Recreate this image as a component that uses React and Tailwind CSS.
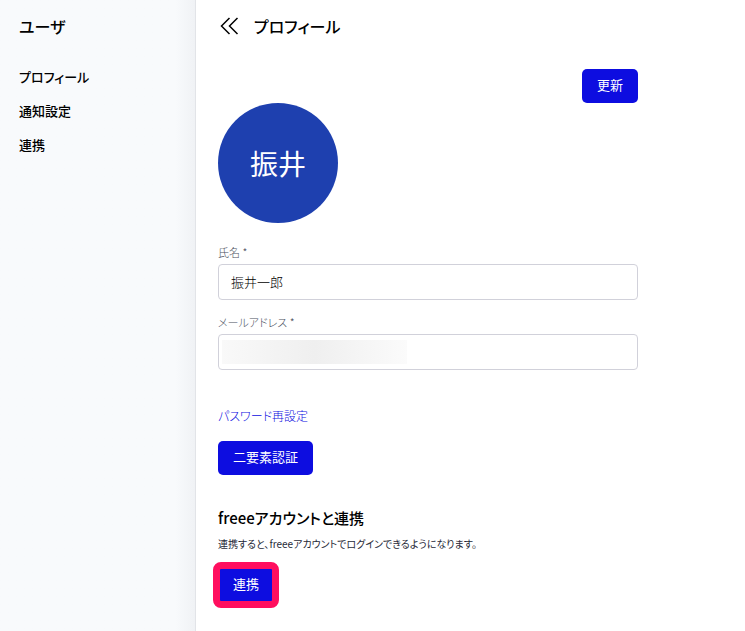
import React, { useState } from 'react';

const menuItems = [
  { label: 'プロフィール', href: '#profile' },
  { label: '通知設定', href: '#notifications' },
  { label: '連携', href: '#connections' },
];

const Button = ({ children, type = 'button' }) => (
  <button
    type={type}
    className="h-[34px] px-[15px] pb-[2px] rounded-[5px] bg-[#0d0de0] text-white text-[13px] hover:bg-[#0a0ab8]"
  >
    {children}
  </button>
);

const Sidebar = () => (
  <aside className="w-[196px] shrink-0 px-[19px] bg-linear-to-r from-[#f8fafc] from-90% to-[#f0f2f5] border-r border-[#e2e4e8]">
    <h2 className="h-[52px] flex items-center text-[16px] font-medium">ユーザ</h2>
    <nav className="pt-2">
      <ul>
        {menuItems.map((item) => (
          <li key={item.href}>
            <a href={item.href} className="flex items-center h-[34px] text-[13px] font-medium">
              {item.label}
            </a>
          </li>
        ))}
      </ul>
    </nav>
  </aside>
);

const Field = ({ id, label, children }) => (
  <div>
    <label htmlFor={id} className="block h-[24px] leading-[24px] text-[11px] font-light text-[#4b5160]">
      {label} *
    </label>
    {children}
  </div>
);

const inputClass =
  'block w-full h-[36px] px-3 pb-[2px] rounded-[4px] border border-[#d1d1da] bg-white text-[13px] font-light outline-none focus:border-[#0d0de0]';

export default function App() {
  const [name, setName] = useState('振井一郎');
  const [email, setEmail] = useState('');

  return (
    <div className="flex min-h-screen bg-white text-black font-['Noto_Sans_CJK_JP',sans-serif] [font-feature-settings:'palt']">
      <Sidebar />

      <main className="flex-1 min-w-0 px-[22px] pb-5">
        <header className="h-[52px] flex items-center gap-[14px]">
          <button type="button" aria-label="メニューを閉じる">
            <svg width="22" height="20" viewBox="0 0 22 20" fill="none" stroke="currentColor" strokeWidth="1.5">
              <path d="M11.5 2 3.5 10l8 8M19.5 2l-8 8 8 8" />
            </svg>
          </button>
          <h1 className="text-[16px] font-medium">プロフィール</h1>
        </header>

        <form className="max-w-[420px] pt-[17px]" onSubmit={(e) => e.preventDefault()}>
          <div className="flex justify-end">
            <Button type="submit">更新</Button>
          </div>

          <div className="size-[120px] rounded-full bg-[#1e40af] flex items-center justify-center text-white text-[28px]">
            振井
          </div>

          <div className="pt-[17px] space-y-[10px]">
            <Field id="name" label="氏名">
              <input
                id="name"
                type="text"
                value={name}
                onChange={(e) => setName(e.target.value)}
                className={inputClass}
              />
            </Field>
            <Field id="email" label="メールアドレス">
              <div className="relative">
                <input
                  id="email"
                  type="email"
                  value={email}
                  onChange={(e) => setEmail(e.target.value)}
                  className={inputClass}
                />
                {/* address is masked */}
                <div className="absolute left-1 inset-y-[6px] w-[185px] pointer-events-none bg-linear-to-r from-[#f9f9f9] via-[#efefef] to-[#fbfbfb]" />
              </div>
            </Field>
          </div>
        </form>

        <section className="pt-[33px]">
          <a href="#password" className="block w-fit h-[26px] leading-[26px] text-[12px] font-light text-[#0d0de0]">
            パスワード再設定
          </a>
          <div className="pt-3">
            <Button>二要素認証</Button>
          </div>
        </section>

        <section className="pt-[30px]">
          <h2 className="h-[26px] leading-[26px] text-[15px] font-medium">freeeアカウントと連携</h2>
          <p className="h-[26px] leading-[26px] text-[10px] text-[#1f2937]">
            連携すると、freeeアカウントでログインできるようになります。
          </p>
          <div className="relative w-fit mt-[11px]">
            <Button>連携</Button>
            <span className="absolute -inset-x-[5px] -inset-y-[6px] rounded-[8px] border-[7px] border-[#ff0f5f] pointer-events-none" />
          </div>
        </section>
      </main>
    </div>
  );
}
